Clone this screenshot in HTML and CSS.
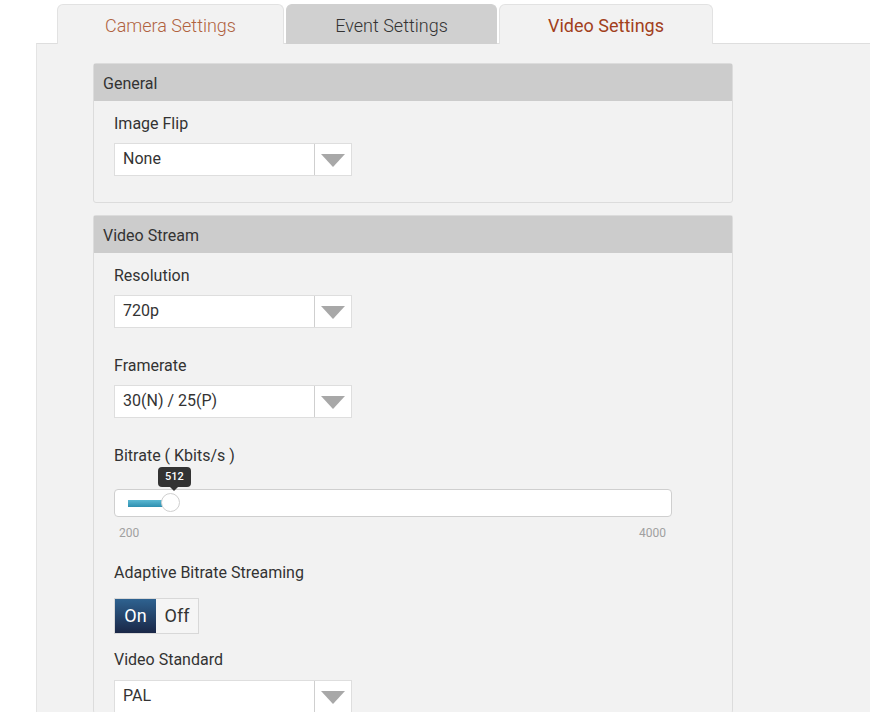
FILE: index.html
```html
<!DOCTYPE html>
<html>
<head>
<meta charset="utf-8">
<link rel="stylesheet" href="styles.css">
</head>
<body>
<div class="tabs">
  <div class="tab tab-camera">Camera Settings</div>
  <div class="tab tab-event">Event Settings</div>
  <div class="tab tab-video">Video Settings</div>
</div>
<div class="panel">
  <div class="card">
    <div class="card-head">General</div>
    <div class="card-body general">
      <div class="label">Image Flip</div>
      <div class="select"><span class="val">None</span><span class="arrow"></span></div>
    </div>
  </div>
  <div class="card card2">
    <div class="card-head">Video Stream</div>
    <div class="card-body">
      <div class="label">Resolution</div>
      <div class="select"><span class="val">720p</span><span class="arrow"></span></div>
      <div class="label gap">Framerate</div>
      <div class="select"><span class="val">30(N) / 25(P)</span><span class="arrow"></span></div>
      <div class="label gap">Bitrate ( Kbits/s )</div>
      <div class="slider">
        <div class="fill"></div>
        <div class="handle"></div>
        <div class="tip">512</div>
      </div>
      <div class="ticks"><span>200</span><span>4000</span></div>
      <div class="label abr">Adaptive Bitrate Streaming</div>
      <div class="toggle"><span class="on">On</span><span class="off">Off</span></div>
      <div class="label vs">Video Standard</div>
      <div class="select last"><span class="val">PAL</span><span class="arrow"></span></div>
    </div>
  </div>
</div>
</body>
</html>
```
FILE: styles.css
```css
html, body {
  margin: 0;
  padding: 0;
  background: #ffffff;
  font-family: Roboto, "Liberation Sans", sans-serif;
  color: #333;
  overflow: hidden;
  height: 712px;
}
.tabs {
  display: flex;
  gap: 2px;
  padding: 4px 0 0 57px;
  position: relative;
  z-index: 2;
  margin-bottom: -1px;
}
.tab {
  height: 40px;
  box-sizing: border-box;
  border: 1px solid #e2e2e2;
  border-bottom: none;
  border-radius: 6px 6px 0 0;
  font-size: 18px;
  font-weight: 300;
  display: flex;
  align-items: center;
  justify-content: center;
  padding-top: 2px;
}
.tab-camera {
  width: 227px;
  background: #f2f2f2;
  color: #b0623f;
}
.tab-event {
  width: 211px;
  background: #d0d0d0;
  color: #333;
  border-color: #d0d0d0;
}
.tab-video {
  width: 214px;
  background: #f2f2f2;
  color: #a2401c;
  font-weight: 400;
}
.panel {
  margin-left: 36px;
  background: #f2f2f2;
  border-top: 1px solid #dedede;
  border-left: 1px solid #e4e4e4;
  padding: 19px 0 0 56px;
  height: 649px;
  overflow: hidden;
}
.card {
  width: 640px;
  box-sizing: border-box;
  border: 1px solid #dcdcdc;
  border-radius: 3px;
  background: #f2f2f2;
}
.card2 {
  margin-top: 12px;
  border-bottom: none;
}
.card-head {
  height: 37px;
  background: #cccccc;
  font-size: 16px;
  line-height: 39px;
  padding-left: 9px;
  color: #333;
}
.card-body {
  padding: 11px 20px 0 20px;
  display: flex;
  flex-direction: column;
  align-items: flex-start;
}
.card-body.general {
  padding-bottom: 26px;
}
.label {
  font-size: 16px;
  line-height: 24px;
  color: #333;
}
.label.gap { margin-top: 26px; }
.select {
  margin-top: 7px;
  width: 238px;
  height: 33px;
  box-sizing: border-box;
  background: #fff;
  border: 1px solid #dedede;
  display: flex;
  align-items: stretch;
}
.select.last { margin-top: 8px; }
.val {
  flex: 1;
  font-size: 16px;
  line-height: 30px;
  padding-left: 8px;
  color: #333;
}
.arrow {
  width: 36px;
  border-left: 1px solid #cfcfcf;
  position: relative;
}
.arrow::after {
  content: "";
  position: absolute;
  left: 6px;
  top: 10px;
  border-left: 12px solid transparent;
  border-right: 12px solid transparent;
  border-top: 13px solid #a8a8a8;
}
.slider {
  margin-top: 21px;
  width: 558px;
  height: 28px;
  box-sizing: border-box;
  background: #fff;
  border: 1px solid #cfcfcf;
  border-radius: 4px;
  position: relative;
}
.fill {
  position: absolute;
  left: 13px;
  top: 10px;
  width: 48px;
  height: 7px;
  background: linear-gradient(#5bb8d2, #2d8fb0);
}
.handle {
  position: absolute;
  left: 46px;
  top: 3px;
  width: 19px;
  height: 19px;
  box-sizing: border-box;
  border-radius: 50%;
  background: #fff;
  border: 1px solid #cfcfcf;
}
.tip {
  position: absolute;
  left: 43px;
  top: -23px;
  width: 33px;
  height: 20px;
  background: #333;
  color: #fff;
  border-radius: 4px;
  font-size: 11px;
  font-weight: 500;
  line-height: 20px;
  text-align: center;
}
.tip::after {
  content: "";
  position: absolute;
  left: 12px;
  bottom: -4px;
  border-left: 4px solid transparent;
  border-right: 4px solid transparent;
  border-top: 4px solid #333;
}
.ticks {
  margin-top: 9px;
  width: 552px;
  padding-left: 5px;
  box-sizing: border-box;
  display: flex;
  justify-content: space-between;
  font-size: 12px;
  line-height: 14px;
  color: #a0a0a0;
}
.label.abr { margin-top: 21px; }
.toggle {
  margin-top: 13px;
  display: flex;
  height: 36px;
  border: 1px solid #d8d8d8;
  box-sizing: border-box;
}
.toggle span {
  font-size: 18px;
  line-height: 34px;
  text-align: center;
}
.on {
  width: 41px;
  background: linear-gradient(#2e6290, #1a2747);
  color: #fff;
  font-weight: 400;
}
.off {
  width: 42px;
  background: #f5f5f5;
  color: #333;
}
.label.vs { margin-top: 14px; }
```
